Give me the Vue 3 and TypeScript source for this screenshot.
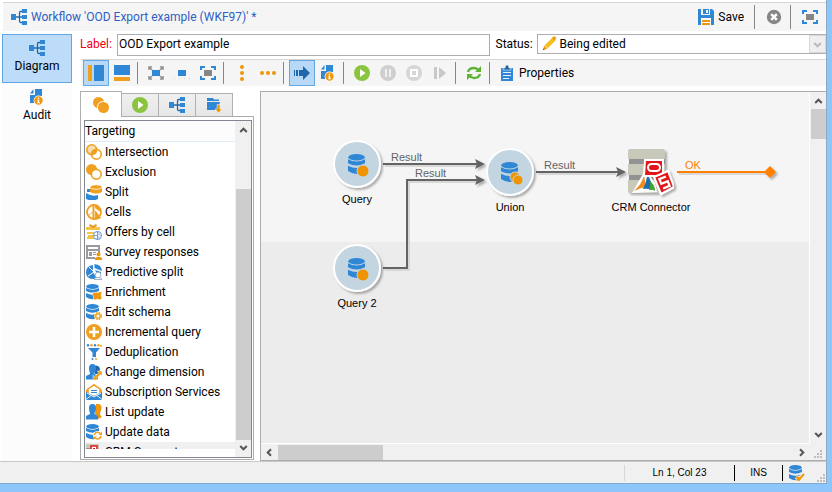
<script setup lang="ts">
import { ref } from 'vue'

interface Entry {
  icon: string
  label: string
}
interface Tool {
  icon: string
  title: string
  pressed?: boolean
  disabled?: boolean
}

const label = ref('OOD Export example')
const status = ref('Being edited')
const activeTab = ref(0)

const sections: Entry[] = [
  { icon: 'tree', label: 'Diagram' },
  { icon: 'audit', label: 'Audit' },
]

const toolGroups: Tool[][] = [
  [
    { icon: 'pane-left', title: 'Palette', pressed: true },
    { icon: 'pane-bottom', title: 'Log' },
  ],
  [
    { icon: 'zoom-in', title: 'Zoom in' },
    { icon: 'zoom-out', title: 'Zoom out' },
    { icon: 'fit', title: 'Fit' },
  ],
  [
    { icon: 'dots-v', title: 'Align vertically' },
    { icon: 'dots-h', title: 'Align horizontally' },
  ],
  [
    { icon: 'arrow', title: 'Progress', pressed: true },
    { icon: 'audit', title: 'Journal' },
  ],
  [
    { icon: 'play', title: 'Start' },
    { icon: 'pause', title: 'Pause', disabled: true },
    { icon: 'stop', title: 'Stop', disabled: true },
    { icon: 'step', title: 'Step', disabled: true },
  ],
  [{ icon: 'refresh', title: 'Refresh' }],
]

const tabs: Tool[] = [
  { icon: 'coins', title: 'Targeting' },
  { icon: 'play', title: 'Execution' },
  { icon: 'tree', title: 'Flow control' },
  { icon: 'folder', title: 'Actions' },
]

const activities: Entry[] = [
  { icon: 'intersection', label: 'Intersection' },
  { icon: 'exclusion', label: 'Exclusion' },
  { icon: 'split', label: 'Split' },
  { icon: 'cells', label: 'Cells' },
  { icon: 'offers', label: 'Offers by cell' },
  { icon: 'survey', label: 'Survey responses' },
  { icon: 'predictive', label: 'Predictive split' },
  { icon: 'enrichment', label: 'Enrichment' },
  { icon: 'schema', label: 'Edit schema' },
  { icon: 'plus', label: 'Incremental query' },
  { icon: 'dedup', label: 'Deduplication' },
  { icon: 'dimension', label: 'Change dimension' },
  { icon: 'subscription', label: 'Subscription Services' },
  { icon: 'list', label: 'List update' },
  { icon: 'update', label: 'Update data' },
  { icon: 'crm-small', label: 'CRM Connector' },
]
</script>

<template>
  <svg class="sprite" aria-hidden="true">
    <defs>
      <symbol id="tree" viewBox="0 0 16 16">
        <path d="M0 5h5v6H0zM11 0h5v4h-5zM11 6h5v4h-5zM11 12h5v4h-5z" fill="#2f87d6" />
        <path d="M5 8h6M11 2.500H9.500Q8.500 2.500 8.500 4V12Q8.500 13.500 9.500 13.500H11" fill="none" stroke="#2767a8" stroke-width="1.300" />
      </symbol>
      <symbol id="audit" viewBox="0 0 16 16">
        <path d="M6 0h7v7H9v7H1V6h5z" fill="#2f87d6" />
        <path d="M4.500 0v4.500H1z" fill="#2f87d6" />
        <circle cx="9.500" cy="11.500" r="4.900" fill="#fff" />
        <circle cx="9.500" cy="11.500" r="4.200" fill="#f0960a" />
        <path d="M8.800 8.700h1.400v1.400H8.800zM8.300 10.800h1.900v2.500h.7v.9H8.200v-.9h.6v-1.600h-.5z" fill="#fff" />
      </symbol>
      <symbol id="save" viewBox="0 0 16 16">
        <path d="M0 0h3v6h9V0h2l2 2v14H0z" fill="#2f87d6" />
        <path d="M5 0h6v5H5z" fill="#2f87d6" />
        <path d="M8 1h2v3H8z" fill="#fff" />
        <path d="M3 9h10v7H3z" fill="#fff" />
        <path d="M4 11h8v2H4zM4 14h8v2H4z" fill="#f0960a" />
      </symbol>
      <symbol id="close" viewBox="0 0 16 16">
        <circle cx="8" cy="8" r="7.200" fill="#868686" />
        <path d="M5.200 5.200l5.600 5.600M10.800 5.200l-5.600 5.600" stroke="#fff" stroke-width="2.400" />
      </symbol>
      <symbol id="fit" viewBox="0 0 16 16">
        <path d="M4 5h8v6H4z" fill="#868686" />
        <path d="M1 5V2h4M11 2h4v3M15 11v3h-4M5 14H1v-3" fill="none" stroke="#2f87d6" stroke-width="2" />
      </symbol>
      <symbol id="pane-left" viewBox="0 0 16 16">
        <path d="M0 0h4v16H0z" fill="#f0a01e" />
        <path d="M6 0h10v16H6z" fill="#2f87d6" />
      </symbol>
      <symbol id="pane-bottom" viewBox="0 0 16 16">
        <path d="M0 12h16v4H0z" fill="#f0a01e" />
        <path d="M0 0h16v10H0z" fill="#2f87d6" />
      </symbol>
      <symbol id="zoom-in" viewBox="0 0 16 16">
        <path d="M4 5h8v6H4z" fill="#2f87d6" />
        <path d="M1 5V2h3M12 2h3v3M15 11v3h-3M4 14H1v-3M2 3l2 2M14 3l-2 2M2 13l2-2M14 13l-2-2" fill="none" stroke="#909090" stroke-width="1.500" />
      </symbol>
      <symbol id="zoom-out" viewBox="0 0 16 16">
        <path d="M4 5h8v6H4z" fill="#2f87d6" />
        <path d="M0 13h1v1H0zM5 13h1v1H5zM10 13h1v1h-1zM15 13h1v1h-1z" fill="#d0d0d0" />
      </symbol>
      <symbol id="dots-v" viewBox="0 0 16 16">
        <g fill="#f0960a"><circle cx="8" cy="2" r="2" /><circle cx="8" cy="8" r="2" /><circle cx="8" cy="14" r="2" /></g>
      </symbol>
      <symbol id="dots-h" viewBox="0 0 16 16">
        <g fill="#f0960a"><circle cx="2" cy="8" r="2" /><circle cx="8" cy="8" r="2" /><circle cx="14" cy="8" r="2" /></g>
      </symbol>
      <symbol id="arrow" viewBox="0 0 16 16">
        <path d="M0 5h1v6H0zM2 5h2v6H2zM5 5h4V1l7 7-7 7v-4H5z" fill="#1f67ad" />
      </symbol>
      <symbol id="play" viewBox="0 0 16 16">
        <circle cx="8" cy="8" r="8" fill="#8bc540" />
        <path d="M6 4l5.500 4L6 12z" fill="#fff" />
      </symbol>
      <symbol id="pause" viewBox="0 0 16 16">
        <circle cx="8" cy="8" r="8" fill="#cfcfcf" />
        <path d="M5 4h2v8H5zM9 4h2v8H9z" fill="#f0f0f0" />
      </symbol>
      <symbol id="stop" viewBox="0 0 16 16">
        <circle cx="8" cy="8" r="8" fill="#d6d6d6" />
        <path d="M4 4h8v8H4z" fill="#fff" />
        <path d="M6 6h4v4H6z" fill="#d6d6d6" />
      </symbol>
      <symbol id="step" viewBox="0 0 16 16">
        <path d="M2 2h3v12H2zM7 2l7 6-7 6z" fill="#c8c8c8" />
      </symbol>
      <symbol id="refresh" viewBox="0 0 16 16">
        <path d="M2 7Q3 3 8 3q3 0 5 2.500M14 9q-1 4-6 4-3 0-5-2.500" fill="none" stroke="#5fb336" stroke-width="2.400" />
        <path d="M15 1v6H9zM1 15V9h6z" fill="#5fb336" />
      </symbol>
      <symbol id="clipboard" viewBox="0 0 16 16">
        <path d="M2 3h12v13H2z" fill="#2f87d6" />
        <path d="M4 5V3h2q0-3 2-3t2 3h2v2z" fill="#1f67ad" stroke="#f5f5f5" stroke-width=".6" />
        <path d="M4 7.500h8M4 10.500h8M4 13.500h6" stroke="#e4f0fa" stroke-width="1" />
      </symbol>
      <symbol id="pencil" viewBox="0 0 16 16">
        <path d="M3.500 9.500l8-8 3 3-8 8z" fill="#f3c01c" />
        <path d="M11 2l1.500-1.500q1-.5 2 .5t.5 2L13.500 4.500zM3.200 9.800l3 3L2 14z" fill="#f09a1a" />
        <path d="M2.600 12l1.400 1.400L1.500 14.500z" fill="#b36a10" />
      </symbol>
      <symbol id="coins" viewBox="0 0 16 16">
        <circle cx="5.500" cy="5.500" r="5.500" fill="#f0a01e" />
        <circle cx="10.500" cy="10.500" r="5.500" fill="#f0a01e" />
        <path d="M4.500 10.500Q4.500 4.600 10.500 4.500" fill="none" stroke="#fff" stroke-width="1" />
      </symbol>
      <symbol id="folder" viewBox="0 0 16 16">
        <path d="M1 1h6l1 1.500h5V4H1zM1 5h13l-1 3v5H1z" fill="#2f87d6" />
        <path d="M11 7.500h3V12h2l-3.500 4L9 12h2z" fill="#f0960a" stroke="#f5f5f5" stroke-width=".5" />
      </symbol>
      <symbol id="intersection" viewBox="0 0 16 16">
        <path d="M5 10Q5 5 10.500 5Q11 10 5 10z" fill="#fff" />
        <circle cx="5.700" cy="5.700" r="4.900" fill="#f0a01e" fill-opacity=".35" stroke="#f0a01e" stroke-width="1.600" />
        <circle cx="10.300" cy="10.300" r="4.900" fill="none" stroke="#f0a01e" stroke-width="1.600" />
        <path d="M5.500 10.500Q5 5 10.500 5.500Q11 10.500 5.500 10.500z" fill="#f0a01e" />
      </symbol>
      <symbol id="exclusion" viewBox="0 0 16 16">
        <circle cx="5.600" cy="5.600" r="5.600" fill="#f0a01e" />
        <circle cx="10.300" cy="10.300" r="4.900" fill="#fff" stroke="#f0a01e" stroke-width="1.600" />
      </symbol>
      <symbol id="split" viewBox="0 0 16 16">
        <path d="M0 9q6 4 12 2v4q-6 3-12 0z" fill="#2f87d6" />
        <path d="M1 5h3v3H1z" fill="#2f87d6" />
        <path d="M4 3v5q6 3 12 0V3z" fill="#f0a01e" />
        <ellipse cx="10" cy="3" rx="6" ry="2.200" fill="#f0a01e" stroke="#fff" stroke-width=".8" />
      </symbol>
      <symbol id="cells" viewBox="0 0 16 16">
        <circle cx="8" cy="8" r="7" fill="#fff" stroke="#f0a01e" stroke-width="1.800" />
        <path d="M7.500 0v16" stroke="#f0a01e" stroke-width="2" />
        <path d="M9.500 1Q15 3 15 8L9.500 4zM7 8L2 12M9.500 7l5 7-5 1.500z" fill="#f0a01e" stroke="#f0a01e" stroke-width=".8" />
      </symbol>
      <symbol id="offers" viewBox="0 0 16 16">
        <path d="M0 3h14v3H0zM1 8h7v2H1zM2 11h6v4H1v-2h1z" fill="#f5c242" />
        <path d="M3 2l1-2 3 2 3-2 1 2-4 2z" fill="#e8921a" />
        <circle cx="11.500" cy="11.500" r="3.900" fill="#fff" stroke="#7ba2d6" stroke-width="1.200" />
        <path d="M11.500 8v8M8 11.500h4M11.500 9.500l3 2M11.500 12l2 2" stroke="#7ba2d6" />
      </symbol>
      <symbol id="survey" viewBox="0 0 16 16">
        <path d="M0 1h14v8h-2V7H2v6h7v2H0zM2 3v2h10V3z" fill="#9a9a9a" fill-rule="evenodd" />
        <path d="M3 8h3v4H3zM7 8h3v1H7zM7 10h3v1H7z" fill="#9a9a9a" />
        <circle cx="12.500" cy="10.500" r="2" fill="#f0960a" />
        <path d="M9 16v-2l2-1h3l2 1v2z" fill="#f0960a" />
      </symbol>
      <symbol id="predictive" viewBox="0 0 16 16">
        <path d="M7 1v7l4 6.500Q0 17 0 8 0 2 7 1z" fill="#2f87d6" />
        <path d="M8.500 0q7 .5 7.500 7l-7.500-3zM9 6l6 2v2H11z" fill="#2f87d6" />
        <path d="M3 3l5 5-6 4" fill="none" stroke="#fff" />
        <circle cx="12" cy="11" r="2.800" fill="#fff" stroke="#9fb4cf" />
        <path d="M8 15.500q0-2 4-2t4 2z" fill="#fff" stroke="#9fb4cf" />
      </symbol>
      <symbol id="db" viewBox="0 0 16 16">
        <ellipse cx="6.500" cy="2.500" rx="6.300" ry="2.500" fill="#2f87d6" />
        <path d="M0 4q6.500 3.500 13 0v3q-6.500 3.500-13 0zM0 9q6.500 3.500 13 0v4q-6.500 4.500-13 0z" fill="#2f87d6" />
      </symbol>
      <symbol id="enrichment" viewBox="0 0 16 16">
        <use href="#db" width="16" height="16" />
        <path d="M7 8l2 .7q1-1.500 2.500 0L14 7.500l2 1-1 2.500 1 3-2 2-2.500-1L9 16l-2-1.500.8-1.500L6.500 11z" fill="#f0960a" stroke="#fff" stroke-width=".5" />
      </symbol>
      <symbol id="schema" viewBox="0 0 16 16">
        <use href="#db" width="16" height="16" />
        <circle cx="12" cy="12" r="4" fill="#fff" />
        <circle cx="12" cy="12" r="3.300" fill="none" stroke="#f0a01e" stroke-width="1.500" stroke-dasharray="1.700 .9" />
        <circle cx="12" cy="12" r="2.200" fill="#fff" stroke="#f0a01e" stroke-width="1.200" />
      </symbol>
      <symbol id="plus" viewBox="0 0 16 16">
        <circle cx="8" cy="8" r="8" fill="#f0a01e" />
        <path d="M8 3v10M3 8h10" stroke="#fff" stroke-width="2.600" />
      </symbol>
      <symbol id="dedup" viewBox="0 0 16 16">
        <path d="M2 4h12L10 8.500V13H6.500V8.500z" fill="#2f87d6" />
        <g fill="#2f87d6"><circle cx="2" cy="1.300" r="1.200" /><circle cx="9" cy="1.300" r="1.200" /><circle cx="6.500" cy="15" r="1" /></g>
        <g fill="#f0a01e"><circle cx="5.500" cy="1.300" r="1.200" /><circle cx="12.500" cy="1.300" r="1.200" /><circle cx="15" cy="1.800" r="1" /><circle cx="10" cy="15" r="1" /></g>
      </symbol>
      <symbol id="person" viewBox="0 0 16 16">
        <path d="M3 4q0-4 3.500-4T10 4q0 3-1.500 5v1l3.500 2v3.500H0V12l4-2V9Q3 7 3 4z" fill="#2f87d6" />
      </symbol>
      <symbol id="dimension" viewBox="0 0 16 16">
        <path d="M9 2q1-1 3 0 2 1 2 4l-2 4H9z" fill="#1f67ad" />
        <use href="#person" width="16" height="16" />
        <path d="M7 16v-5l1.700 1.500 4-4L11 7h5v5l-1.500-1.500-4 4L12 16z" fill="#f0a01e" stroke="#fff" stroke-width=".4" />
      </symbol>
      <symbol id="subscription" viewBox="0 0 16 16">
        <path d="M0 6l8-6 8 6v3l-3 2V5H3v6L0 9z" fill="#f0a01e" />
        <path d="M2 5l6-4 6 4v5l-6 3-6-3z" fill="#fff" stroke="#f0a01e" stroke-width="1.500" />
        <path d="M5 6.500h6M5 8.500h6" stroke="#2f87d6" />
        <path d="M0 8l8 4 8-4v8H0z" fill="#2f87d6" />
        <path d="M0 15.500l5-4M16 15.500l-5-4M1 9l7 4 7-4" fill="none" stroke="#fff" stroke-width=".9" />
      </symbol>
      <symbol id="list" viewBox="0 0 16 16">
        <path d="M10 0h3q3 1 2.500 5L14 9q-.5 2 2 4l-4 2-3-5z" fill="#f0960a" />
        <use href="#person" width="16" height="16" />
      </symbol>
      <symbol id="update" viewBox="0 0 16 16">
        <use href="#db" width="16" height="16" />
        <circle cx="11.500" cy="11.500" r="4.500" fill="#fff" />
        <path d="M8.200 11q.8-2.800 3.500-2.800 1.500 0 2.800 1.500M15 12q-.8 3-3.500 3-1.500 0-2.800-1.500" fill="none" stroke="#f0a01e" stroke-width="1.500" />
        <path d="M16 7.500V11h-3.500zM7.500 16v-3.500H11z" fill="#f0a01e" />
      </symbol>
      <symbol id="db-key" viewBox="0 0 16 16">
        <use href="#db" width="16" height="16" />
        <path d="M7 12l3 2 5-5" fill="none" stroke="#f0f0f0" stroke-width="4" />
        <path d="M7 12.500h2l1.500 1.500L15 9" fill="none" stroke="#f0960a" stroke-width="2" />
        <circle cx="9.500" cy="14" r="2" fill="#f0960a" />
      </symbol>
      <symbol id="crm" viewBox="0 0 48 48">
        <path d="M2 3q0-2 2-2h33q2 0 2 2v8H2zM2 16h37v11H2zM2 32h37v11q0 2-2 2H4q-2 0-2-2z" fill="#c8c8bb" />
        <path d="M3 11h36v5H3zM3 27h36v5H3z" fill="#929292" />
        <path d="M6 45L18 24l5 3 6 8 2 9z" fill="#fff" />
        <path d="M8 43q8-7 10-16l2 12q-6 1-12 4z" fill="#f08c1e" />
        <path d="M17 41q4-8 4-15 5 7 5 16-4-2-9-1z" fill="#1e6cb4" />
        <path d="M23 42q2-5 1-9 5 4 5 10-3-2-6-1z" fill="#3fa535" />
        <path d="M19 12h18v16H18z" fill="#e3181c" stroke="#fff" stroke-width="2" />
        <rect x="22" y="16" width="12" height="7" rx="3.500" fill="none" stroke="#fff" stroke-width="2" />
        <path d="M28 29l14-6 6 16-13 7z" fill="#e3181c" stroke="#fff" stroke-width="2" />
        <path d="M42 29.500h-7v5h7v5h-7" fill="none" stroke="#fff" stroke-width="2.300" transform="rotate(-22 38.500 34.500)" />
      </symbol>
      <symbol id="crm-small" viewBox="0 0 16 16">
        <path d="M0 0h13v16H0z" fill="#c8c8bb" />
        <path d="M0 4h5v2H0z" fill="#929292" />
        <path d="M5 2h6v7H5z" fill="#fff" stroke="#e3181c" stroke-width="1.500" />
        <path d="M7 4h2v2H7z" fill="#e3181c" />
      </symbol>
      <symbol id="chevron-up" viewBox="0 0 9 9">
        <path d="M1.200 6l3.300-3.300L7.800 6" fill="none" stroke="currentColor" stroke-width="2" />
      </symbol>
      <symbol id="chevron-down" viewBox="0 0 9 9">
        <path d="M1.200 3l3.300 3.300L7.800 3" fill="none" stroke="currentColor" stroke-width="2" />
      </symbol>
      <symbol id="chevron-left" viewBox="0 0 9 9">
        <path d="M6 1.200L2.700 4.500 6 7.800" fill="none" stroke="currentColor" stroke-width="2" />
      </symbol>
      <symbol id="chevron-right" viewBox="0 0 9 9">
        <path d="M3 1.200l3.300 3.300L3 7.800" fill="none" stroke="currentColor" stroke-width="2" />
      </symbol>
      <symbol id="grip" viewBox="0 0 8 8">
        <path d="M6 0h2v2H6zM3 3h2v2H3zM6 3h2v2H6zM0 6h2v2H0zM3 6h2v2H3zM6 6h2v2H6z" fill="#bdbdbd" />
      </symbol>
    </defs>
  </svg>

  <div class="window">
    <header class="titlebar">
      <svg class="icon"><use href="#tree" /></svg>
      <h1>Workflow 'OOD Export example (WKF97)' *</h1>
      <button class="save"><svg class="icon"><use href="#save" /></svg>Save</button>
      <button class="head-btn" aria-label="Close"><svg class="icon"><use href="#close" /></svg></button>
      <button class="head-btn last" aria-label="Full screen"><svg class="icon"><use href="#fit" /></svg></button>
    </header>

    <div class="body">
      <nav class="sections">
        <button v-for="(s, i) in sections" :key="s.label" :class="{ current: i === 0 }">
          <svg class="icon"><use :href="'#' + s.icon" /></svg>{{ s.label }}
        </button>
      </nav>

      <main class="content">
        <div class="form">
          <label class="required" for="wf-label">Label:</label>
          <input id="wf-label" v-model="label" type="text" />
          <label class="status-label" for="wf-status">Status:</label>
          <div class="combo">
            <svg class="icon"><use href="#pencil" /></svg>
            <select id="wf-status" v-model="status"><option>Being edited</option></select>
            <span class="drop"><svg class="chev"><use href="#chevron-down" /></svg></span>
          </div>
        </div>

        <div class="toolbar">
          <div v-for="(group, g) in toolGroups" :key="g" class="group">
            <button
              v-for="t in group"
              :key="t.title"
              :aria-label="t.title"
              :disabled="t.disabled"
              :class="{ pressed: t.pressed }"
            >
              <svg class="icon"><use :href="'#' + t.icon" /></svg>
            </button>
          </div>
          <button class="props"><svg class="icon"><use href="#clipboard" /></svg>Properties</button>
        </div>

        <div class="workspace">
          <aside class="palette">
            <div class="tabs">
              <button
                v-for="(t, i) in tabs"
                :key="t.title"
                :aria-label="t.title"
                :class="{ active: i === activeTab }"
                @click="activeTab = i"
              >
                <svg class="icon"><use :href="'#' + t.icon" /></svg>
              </button>
            </div>
            <div class="tab-panel">
              <div class="listbox">
                <div class="entries">
                  <h2>Targeting</h2>
                  <ul>
                    <li v-for="a in activities" :key="a.label">
                      <button><svg class="icon"><use :href="'#' + a.icon" /></svg>{{ a.label }}</button>
                    </li>
                  </ul>
                </div>
                <div class="vbar list-bar">
                  <svg class="chev"><use href="#chevron-up" /></svg>
                  <div class="track"><i class="thumb"></i></div>
                  <svg class="chev"><use href="#chevron-down" /></svg>
                </div>
              </div>
            </div>
          </aside>

          <section class="canvas">
            <div class="board">
              <svg class="diagram" width="548" height="350">
                <defs>
                  <filter id="soft" x="-20%" y="-20%" width="150%" height="150%">
                    <feDropShadow dx="2" dy="2" stdDeviation="1.200" flood-opacity=".3" />
                  </filter>
                </defs>
                <g fill="none" stroke="#d8d8d8" stroke-width="2">
                  <path d="M124 74h93M124 178h24V90h68M277 82h78M418 82h94" />
                </g>
                <g fill="none" stroke="#646464" stroke-width="2">
                  <path d="M122 72h94M122 176h24V88h70M275 80h82" />
                </g>
                <path d="M416 80h92" stroke="#ff8000" stroke-width="2" />
                <g fill="#646464" filter="url(#soft)">
                  <path d="M214 67l10 5-10 5 2-5zM214 83l10 5-10 5 2-5zM355 75l10 5-10 5 2-5z" />
                  <path d="M509 74l6 6-6 6-6-6z" fill="#ff8000" />
                </g>
                <g fill="#c3d5e1" stroke="#fff" stroke-width="2" filter="url(#soft)">
                  <circle cx="96" cy="72" r="23" /><circle cx="96" cy="176" r="23" /><circle cx="249" cy="80" r="23" />
                </g>
                <use href="#db" x="87" y="62" width="21" height="21" />
                <use href="#db" x="87" y="166" width="21" height="21" />
                <use href="#db" x="240" y="70" width="21" height="21" />
                <g fill="#f09300" stroke="#c3d5e1">
                  <circle cx="102" cy="79" r="6" /><circle cx="102" cy="183" r="6" />
                  <circle cx="254" cy="85" r="5" /><circle cx="257" cy="88" r="5" />
                </g>
                <use href="#crm" x="365" y="56" width="48" height="48" filter="url(#soft)" />
                <g class="edge-text">
                  <text x="130" y="69">Result</text><text x="154" y="85">Result</text>
                  <text x="283" y="77">Result</text><text x="424" y="77" class="ok">OK</text>
                </g>
                <g class="node-text">
                  <text x="96" y="111">Query</text><text x="96" y="215">Query 2</text>
                  <text x="249" y="119">Union</text><text x="390" y="119">CRM Connector</text>
                </g>
              </svg>
            </div>
            <div class="vbar">
              <svg class="chev"><use href="#chevron-up" /></svg>
              <div class="track"><i class="thumb"></i></div>
              <svg class="chev"><use href="#chevron-down" /></svg>
            </div>
            <div class="hbar">
              <svg class="chev"><use href="#chevron-left" /></svg>
              <div class="track"><i class="thumb"></i></div>
              <svg class="chev"><use href="#chevron-right" /></svg>
            </div>
            <div class="corner"><svg class="grip"><use href="#grip" /></svg></div>
          </section>
        </div>
      </main>
    </div>

    <footer class="statusbar">
      <span class="pos">Ln 1, Col 23</span>
      <span class="ins">INS</span>
      <span class="conn"><svg class="icon"><use href="#db-key" /></svg></span>
      <svg class="grip"><use href="#grip" /></svg>
    </footer>
  </div>
</template>

<style>
body {
  background: #8cc6fa;
}
</style>

<style scoped>
.sprite {
  position: absolute;
  width: 0;
  height: 0;
}
* {
  box-sizing: border-box;
}
.window {
  display: flex;
  flex-direction: column;
  height: calc(100vh - 8px);
  margin-right: 5px;
  padding-top: 2px;
  background: #fff;
  border-right: 1px solid #8fa9c0;
  border-bottom: 1px solid #7fa9cf;
  font: 12px/16px Roboto, "Open Sans", sans-serif;
  color: #000;
}
button {
  display: flex;
  align-items: center;
  justify-content: center;
  padding: 0;
  border: 0;
  background: none;
  font: inherit;
  color: inherit;
}
.icon {
  display: block;
  flex: none;
  width: 16px;
  height: 16px;
}
.chev {
  display: block;
  flex: none;
  width: 9px;
  height: 9px;
  color: #555;
}
.titlebar {
  display: flex;
  align-items: center;
  flex: none;
  height: 29px;
  margin-left: 3px;
  padding-left: 8px;
  background: #f5f5f5;
  border-top: 1px solid #d6d6d6;
}
h1 {
  margin: 0 auto 0 4px;
  font-size: 12px;
  font-weight: 400;
  color: #2f5fc4;
}
.save {
  gap: 4px;
  padding-right: 10px;
}
.head-btn {
  width: 36px;
  height: 24px;
  border-left: 1px solid #868686;
  padding-left: 2px;
}
.head-btn.last {
  padding-left: 2px;
}
.body {
  display: flex;
  flex: 1;
  min-height: 0;
  padding-top: 3px;
}
.sections {
  flex: none;
  width: 70px;
  margin-left: 2px;
  background: #fcfcfc;
}
.sections button {
  flex-direction: column;
  justify-content: flex-start;
  gap: 2px;
  width: 100%;
  height: 49px;
  padding-top: 5px;
  border: 1px solid transparent;
}
.sections .current {
  background: #bcdcfa;
  border-color: #62a6e4;
}
.content {
  display: flex;
  flex-direction: column;
  flex: 1;
  min-width: 0;
  padding-left: 8px;
}
.form {
  display: flex;
  align-items: flex-start;
  flex: none;
  height: 25px;
}
.form label {
  line-height: 20px;
}
.required {
  width: 37px;
  color: #f00010;
}
input {
  flex: 373;
  min-width: 0;
  height: 22px;
  padding: 0 1px 2px;
  border: 1px solid #abadb3;
  background: #fff;
  font: inherit;
  color: inherit;
}
.status-label {
  width: 47px;
  padding-left: 6px;
}
.combo {
  display: flex;
  align-items: center;
  flex: 289;
  min-width: 0;
  height: 20px;
  padding-left: 3px;
  border: 1px solid #abadb3;
  border-right: 0;
}
select {
  flex: 1;
  min-width: 0;
  padding: 0 0 0 3px;
  border: 0;
  appearance: none;
  background: none;
  font: inherit;
  color: inherit;
}
.drop {
  display: flex;
  align-items: center;
  justify-content: center;
  width: 17px;
  height: 18px;
  background: #efefef;
  border: 1px solid #d9d9d9;
}
.drop .chev {
  color: #bababa;
}
.toolbar {
  display: flex;
  align-items: center;
  flex: none;
  height: 27px;
  margin-left: 1px;
  padding-left: 2px;
  background: #f5f5f5;
  border-top: 1px solid #d6d6d6;
}
.group {
  display: flex;
  align-items: center;
}
.group button {
  width: 26px;
  height: 26px;
}
.group .pressed {
  background: #b8d8f8;
  border: 1px solid #62a6e4;
}
.group::after {
  content: "";
  width: 1px;
  height: 22px;
  margin: 0 5px 0 2px;
  background: #868686;
}
.props {
  gap: 4px;
  padding-left: 4px;
}
.workspace {
  display: flex;
  flex: 1;
  min-height: 0;
  gap: 6px;
  padding-top: 5px;
}
.palette {
  display: flex;
  flex-direction: column;
  flex: none;
  width: 174px;
  padding-bottom: 1px;
}
.tabs {
  display: flex;
  align-items: flex-end;
  height: 25px;
}
.tabs button {
  width: 37px;
  height: 23px;
  border: 1px solid #b0b0b0;
  border-left-width: 0;
  border-bottom: 0;
  background: linear-gradient(#f0f0f0, #e6e6e6);
}
.tabs .active {
  position: relative;
  width: 42px;
  height: 26px;
  margin-bottom: -1px;
  border-left-width: 1px;
  background: #fff;
}
.tab-panel {
  display: flex;
  flex: 1;
  min-height: 0;
  padding: 3px 1px 1px 3px;
  border: 1px solid #acacac;
}
.listbox {
  display: flex;
  flex: 1;
  min-width: 0;
  border: 1px solid #828790;
}
.entries {
  flex: 1;
  min-width: 0;
  margin-bottom: 8px;
  overflow: hidden;
}
h2 {
  height: 21px;
  margin: 0;
  font-size: 12px;
  font-weight: 400;
  line-height: 21px;
  background: #fcfcfc;
  border-bottom: 1px solid #e0ecf8;
}
ul {
  margin: 0;
  padding: 0;
  list-style: none;
}
li button {
  justify-content: flex-start;
  gap: 3px;
  width: 100%;
  height: 20px;
  padding-left: 1px;
  white-space: nowrap;
}
li:last-child button {
  background: #f0f0f0;
}
.vbar {
  display: flex;
  flex-direction: column;
  align-items: center;
  width: 16px;
  padding: 5px 0;
  background: #f0f0f0;
}
.vbar .track {
  flex: 1;
  width: 15px;
  margin: 3px 0;
}
.vbar .thumb {
  display: block;
  height: 30px;
  background: #cdcdcd;
}
.list-bar .track {
  display: flex;
  align-items: flex-end;
}
.list-bar .thumb {
  width: 100%;
  height: 83%;
}
.canvas {
  display: grid;
  grid-template: minmax(0, 1fr) 16px / minmax(0, 1fr) 16px;
  flex: 1;
  min-width: 0;
  border: 1px solid #acacac;
  border-right-width: 0;
  background: #f0f0f0;
}
.board {
  position: relative;
  overflow: hidden;
  border: solid #fff;
  border-width: 0 1px 1px 0;
  background: linear-gradient(#f5f5f5 150px, #ececec 150px);
}
.diagram {
  position: absolute;
  top: 0;
  left: 0;
}
.edge-text,
.node-text {
  font: 11px "Liberation Sans", Arial, sans-serif;
}
.edge-text {
  fill: #646464;
}
.ok {
  fill: #ff8000;
}
.node-text {
  text-anchor: middle;
}
.hbar {
  display: flex;
  align-items: center;
  padding: 0 4px;
}
.hbar .track {
  flex: 1;
  margin: 0 4px;
}
.hbar .thumb {
  display: block;
  width: 105px;
  height: 15px;
  background: #cdcdcd;
}
.grip {
  display: block;
  width: 8px;
  height: 8px;
}
.corner {
  display: flex;
  align-items: flex-end;
  justify-content: flex-end;
  padding: 0 4px 2px 0;
}
.statusbar {
  display: flex;
  align-items: center;
  justify-content: flex-end;
  flex: none;
  height: 22px;
  border-top: 1px solid #c8c8c8;
  background: #f0f0f0;
  font: 10px/16px "Liberation Sans", Arial, sans-serif;
}
.statusbar span {
  display: flex;
  align-items: center;
  justify-content: center;
  height: 16px;
}
.pos {
  width: 111px;
  border-left: 1px solid #d6d6d6;
  border-right: 1px solid #000;
}
.ins {
  width: 48px;
  border-right: 1px solid #000;
}
.conn {
  width: 28px;
}
.statusbar .grip {
  align-self: flex-end;
  margin: 0 1px 1px 6px;
}
</style>
